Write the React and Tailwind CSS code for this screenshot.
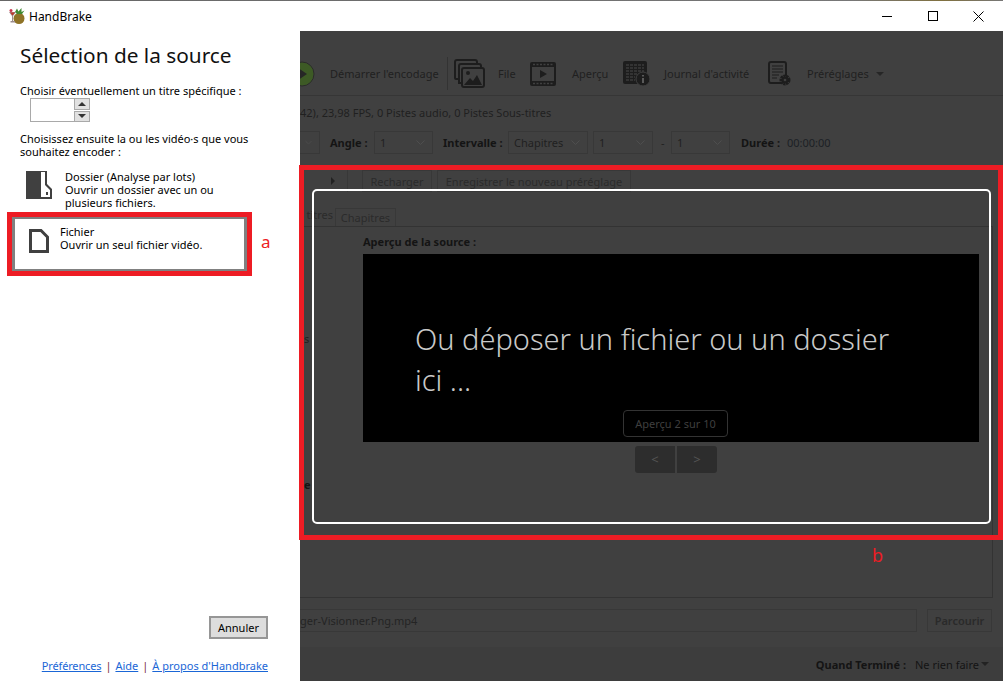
import React from "react";

const Chevron = () => (
  <svg width="9" height="5" viewBox="0 0 9 5" fill="none" stroke="#4e4e4e" strokeWidth="1">
    <path d="M0.5 0.5 L4.5 4.5 L8.5 0.5" />
  </svg>
);

function Select({ w, label }) {
  return (
    <div className={`${w} h-[23px] shrink-0 border border-[#383838] flex items-center justify-between pl-[5px] pr-[7px]`}>
      <span>{label}</span>
      <Chevron />
    </div>
  );
}

const Handbrake = () => (
  <svg width="16" height="16" viewBox="0 0 16 16">
    <ellipse cx="10" cy="10.5" rx="5.5" ry="5.5" fill="#8f7327" />
    <path d="M6 4 L8 0.5 L9.5 3.5 L12.5 0 L12.5 4 L15.5 2.5 L13 6 H8 Z" fill="#3f8a32" />
    <path d="M0 4 H7 L4 8 V13 H6 V14.5 H1.5 V13 H3 V8 Z" fill="#9c8c8c" />
    <path d="M1 4.5 H6 L3.5 7.5 Z" fill="#c0392b" />
    <circle cx="2" cy="2.5" r="1.5" fill="#c8344a" />
  </svg>
);

const ToolStack = () => (
  <svg width="31" height="29" viewBox="0 0 31 29" fill="none" stroke="#1d1d1d" strokeWidth="2">
    <path d="M4 20 H2 Q1 20 1 19 V3 Q1 1 3 1 H21 Q23 1 23 3 V4" />
    <path d="M7 24 H5 V7 Q5 5 7 5 H25 Q27 5 27 7 V8" />
    <rect x="8" y="9" width="22" height="19" rx="2" fill="#404040" />
    <circle cx="14" cy="14" r="2" fill="#1d1d1d" stroke="none" />
    <path d="M10 26 L16 19 L19 22 L23 16 L28 26 Z" fill="#1d1d1d" stroke="none" />
  </svg>
);

const ToolFilm = () => (
  <svg width="26" height="24" viewBox="0 0 26 24" fill="none">
    <rect x="0" y="0" width="26" height="24" rx="2" fill="#1d1d1d" />
    <rect x="2" y="5" width="22" height="14" fill="#404040" />
    <path d="M10 8 L17 12 L10 16 Z" fill="#1d1d1d" />
    <path d="M3 2.5 H23 M3 21.5 H23" stroke="#404040" strokeWidth="1.4" strokeDasharray="2 1.5" />
  </svg>
);

const ToolLog = () => (
  <svg width="28" height="26" viewBox="0 0 28 26" fill="none">
    <rect x="0" y="0" width="24" height="23" rx="2" fill="#1d1d1d" />
    <path d="M3 4 H21 M3 7 H21 M3 10 H21 M3 13 H15 M3 16 H12 M3 19 H12" stroke="#4a4a4a" strokeWidth="1" strokeDasharray="3 1" />
    <circle cx="20" cy="18" r="7" fill="#1d1d1d" stroke="#404040" strokeWidth="1" />
    <path d="M20 17 V22 M20 14 V15.5" stroke="#5a5a5a" strokeWidth="2" />
  </svg>
);

const ToolPreset = () => (
  <svg width="23" height="25" viewBox="0 0 23 25" fill="none">
    <rect x="1" y="1" width="17" height="21" rx="2" stroke="#1d1d1d" strokeWidth="2" />
    <path d="M4 5 H15 M4 8 H15 M4 11 H15 M4 14 H11 M4 17 H9" stroke="#1d1d1d" strokeWidth="1.2" />
    <circle cx="17" cy="19" r="4" fill="#404040" stroke="#1d1d1d" strokeWidth="3" strokeDasharray="2.2 0.6" />
    <circle cx="17" cy="19" r="3.4" fill="#1d1d1d" />
    <circle cx="17" cy="19" r="1.3" fill="#404040" />
  </svg>
);

export default function App() {
  return (
    <div className="relative w-[1003px] h-[681px] overflow-hidden flex flex-col bg-white font-['Noto_Sans',sans-serif] text-[11px] leading-[13px] text-black">
      <div className="h-px shrink-0 bg-[linear-gradient(90deg,#666_0%,#777_85%,#80703f_94%,#777_100%)]" />
      <div className="h-[30px] shrink-0 flex items-center pl-[9px] pr-[2px] text-[12px]">
        <Handbrake />
        <span className="ml-[4px]">HandBrake</span>
        <div className="ml-auto flex">
          <div className="w-[46px] h-[30px] flex items-center justify-center">
            <div className="w-[10px] h-px bg-black" />
          </div>
          <div className="w-[45px] h-[30px] flex items-center justify-center">
            <div className="w-[10px] h-[10px] border border-black" />
          </div>
          <div className="w-[46px] h-[30px] flex items-center justify-center">
            <svg width="11" height="11" viewBox="0 0 11 11" stroke="#000" strokeWidth="1" fill="none">
              <path d="M0.5 0.5 L10.5 10.5 M10.5 0.5 L0.5 10.5" />
            </svg>
          </div>
        </div>
      </div>

      <div className="flex-1 flex min-h-0">
        <aside className="w-[300px] shrink-0 flex flex-col">
          <h1 className="pl-[20px] mt-[9px] text-[20.8px] leading-[30px] font-normal text-[#111]">Sélection de la source</h1>
          <p className="pl-[20px] mt-[14px] whitespace-nowrap">Choisir éventuellement un titre spécifique :</p>
          <div className="ml-[30px] mt-[1px] flex h-[24px]">
            <div className="w-[44px] border border-[#a9a9a9] border-r-0 bg-white" />
            <div className="w-[16px] flex flex-col gap-px">
              <div className="flex-1 bg-[#e1e1e1] border border-[#a9a9a9] flex items-center justify-center">
                <div className="w-0 h-0 border-x-[4px] border-x-transparent border-b-[4px] border-b-[#333]" />
              </div>
              <div className="flex-1 bg-[#e1e1e1] border border-[#a9a9a9] flex items-center justify-center">
                <div className="w-0 h-0 border-x-[4px] border-x-transparent border-t-[4px] border-t-[#333]" />
              </div>
            </div>
          </div>
          <p className="pl-[20px] mt-[10px]">
            Choisissez ensuite la ou les vidéo·s que vous
            <br />
            souhaitez encoder :
          </p>
          <div className="flex mt-[12px] pl-[26px]">
            <svg width="26" height="28" viewBox="0 0 26 28" className="mt-[1px]">
              <path d="M0 0 H21 V13 L26 18 V28 H0 Z" fill="#404040" />
              <path d="M15 1 H19 V14 L24 19 V26 H15 Z" fill="#fff" />
              <rect x="20" y="21" width="2" height="3" fill="#404040" />
            </svg>
            <div className="ml-[13px]">
              Dossier (Analyse par lots)
              <br />
              Ouvrir un dossier avec un ou
              <br />
              plusieurs fichiers.
            </div>
          </div>
          <div className="flex items-center mt-[3px] ml-[7px]">
            <div className="w-[245px] h-[64px] border-[5px] border-[#ed1c24]">
              <div className="h-full border-[3px] border-[#808080] border-b-2 border-t-2 bg-white flex items-center pl-[14px]">
                <svg width="20" height="24" viewBox="0 0 20 24" fill="none" stroke="#404040" strokeWidth="3" className="-mt-[6px]">
                  <path d="M1.5 1.5 H12 L18.5 8 V22.5 H1.5 Z" />
                </svg>
                <div className="ml-[11px] -mt-[12px]">
                  Fichier
                  <br />
                  Ouvrir un seul fichier vidéo.
                </div>
              </div>
            </div>
            <span className="ml-[9px] text-[17px] leading-[20px] text-[#ed1c24] -mt-[5px]">a</span>
          </div>
          <div className="mt-auto pr-[32px] flex flex-col items-end pb-[9px]">
            <button className="w-[59px] h-[23px] bg-[#dddddd] border-2 border-[#969696] flex items-center justify-center text-[11px]">
              Annuler
            </button>
            <div className="mt-[20px] flex gap-[4px] text-[#1a66d6]">
              <a className="underline tracking-[-0.15px]">Préférences</a>
              <span className="text-[#7a2a3a]">|</span>
              <a className="underline">Aide</a>
              <span className="text-[#7a2a3a]">|</span>
              <a className="underline">À propos d'Handbrake</a>
            </div>
          </div>
        </aside>

        <main className="flex-1 min-w-0 bg-[#404040] flex flex-col text-[#202020] whitespace-nowrap overflow-hidden">
          <div className="h-[65px] shrink-0 border-b border-[#363636] flex items-center pt-[21px]">
            <svg width="16" height="26" viewBox="0 0 16 26" className="shrink-0">
              <circle cx="2" cy="13" r="12" fill="#3d5a25" stroke="#2b2b2b" strokeWidth="1" />
              <path d="M-2 7 L7 13 L-2 19 Z" fill="#262626" />
            </svg>
            <span className="ml-[14px] w-[107px]">Démarrer l'encodage</span>
            <div className="ml-[10px] w-px h-[33px] bg-[#333]" />
            <div className="ml-[6px]"><ToolStack /></div>
            <span className="ml-[13px] w-[18px]">File</span>
            <div className="ml-[14px]"><ToolFilm /></div>
            <span className="ml-[16px] w-[36px]">Aperçu</span>
            <div className="ml-[15px]"><ToolLog /></div>
            <span className="ml-[13px] w-[87px]">Journal d'activité</span>
            <div className="ml-[17px]"><ToolPreset /></div>
            <span className="ml-[16px] w-[60px]">Préréglages</span>
            <div className="ml-[9px] w-0 h-0 border-x-[4px] border-x-transparent border-t-[4px] border-t-[#262626]" />
          </div>

          <div className="h-[35px] shrink-0 flex items-center pb-[2px]">42), 23,98 FPS, 0 Pistes audio, 0 Pistes Sous-titres</div>

          <div className="h-[23px] shrink-0 flex items-center">
            <Select w="w-[20px] border-l-0" label="" />
            <b className="ml-[10px] w-[44px] text-[#141414] font-bold">Angle :</b>
            <Select w="w-[59px]" label="1" />
            <b className="ml-[10px] w-[65px] text-[#141414] font-bold">Intervalle :</b>
            <Select w="w-[80px]" label="Chapitres" />
            <div className="ml-[5px]"><Select w="w-[60px]" label="1" /></div>
            <span className="ml-[8px] w-[10px]">-</span>
            <Select w="w-[59px]" label="1" />
            <b className="ml-[11px] w-[46px] text-[#141414] font-bold">Durée :</b>
            <span className="text-[#1c2025]">00:00:00</span>
          </div>

          <div className="mt-[16px] h-[22px] shrink-0 flex items-center">
            <div className="ml-[31px] w-0 h-0 border-y-[4px] border-y-transparent border-l-[4px] border-l-[#222]" />
            <div className="ml-[12px] w-px h-full bg-[#383838]" />
            <div className="ml-[14px] w-[70px] h-full border border-[#383838] flex items-center justify-center text-[#2b2b2b]">Recharger</div>
            <div className="ml-[5px] w-[194px] h-full border border-[#383838] flex items-center justify-center text-[#2b2b2b]">Enregistrer le nouveau préréglage</div>
          </div>

          <div className="mt-[17px] h-[18px] shrink-0 border-b border-[#333] mr-[10px] flex items-end">
            <div className="w-[36px] h-[18px] border-r border-[#383838] overflow-hidden text-right pr-[2px] text-[#2b2b2b]">titres</div>
            <div className="w-[60px] h-[18px] border border-[#383838] border-l-0 border-b-0 flex items-center justify-center text-[#2b2b2b]">Chapitres</div>
          </div>

          <div className="h-[371px] shrink-0 border-b border-r border-[#333] mr-[10px] flex">
            <div className="w-[63px] shrink-0 pl-[4px] flex flex-col">
              <span className="mt-[105px]">s</span>
              <b className="mt-[133px] text-[#141414]">e</b>
            </div>
            <div className="flex-1 flex flex-col">
              <b className="mt-[8px] mb-[1px] text-[#141414] font-bold">Aperçu de la source :</b>
              <div className="mt-[5px] w-[616px] h-[188px] bg-black flex flex-col">
                <p className="mt-[64px] ml-[52px] w-[500px] whitespace-normal text-[29px] leading-[41px] font-light text-[#c9c9c9]">
                  Ou déposer un fichier ou un dossier ici ...
                </p>
                <div className="mt-[10px] ml-[260px] w-[105px] h-[27px] rounded-[4px] border border-[#333] flex items-center justify-center text-[#3f3f3f]">
                  Aperçu 2 sur 10
                </div>
              </div>
              <div className="mt-[4px] ml-[272px] flex gap-[2px]">
                <div className="w-[40px] h-[27px] rounded-l-[3px] bg-[#2d2d2d] flex items-center justify-center text-[#555] text-[13px]">&lt;</div>
                <div className="w-[40px] h-[27px] rounded-r-[3px] bg-[#2d2d2d] flex items-center justify-center text-[#555] text-[13px]">&gt;</div>
              </div>
            </div>
          </div>

          <div className="mt-[11px] h-[23px] shrink-0 flex mr-[10px]">
            <div className="w-[617px] border border-[#383838] border-l-0 flex items-center text-[#242424]">ger-Visionner.Png.mp4</div>
            <div className="ml-[10px] w-[65px] border border-[#383838] flex items-center justify-center font-semibold text-[#2a2a2a]">Parcourir</div>
          </div>

          <div className="mt-[15px] flex-1 bg-[#3d3d3d] flex items-center justify-end pr-[14px]">
            <b className="text-[#141414] font-bold">Quand Terminé :</b>
            <span className="ml-[9px] text-[#141414]">Ne rien faire</span>
            <div className="ml-[2px] w-0 h-0 border-x-[4px] border-x-transparent border-t-[4px] border-t-[#222]" />
          </div>
        </main>
      </div>

      {/* annotations lying over the window */}
      <div className="absolute left-[299px] top-[165px] w-[704px] h-[375px] border-[5px] border-[#ed1c24]" />
      <div className="absolute left-[312px] top-[189px] w-[679px] h-[335px] border-2 border-white rounded-[5px]" />
      <span className="absolute left-[872px] top-[545px] text-[18px] leading-[20px] text-[#ed1c24]">b</span>
    </div>
  );
}
